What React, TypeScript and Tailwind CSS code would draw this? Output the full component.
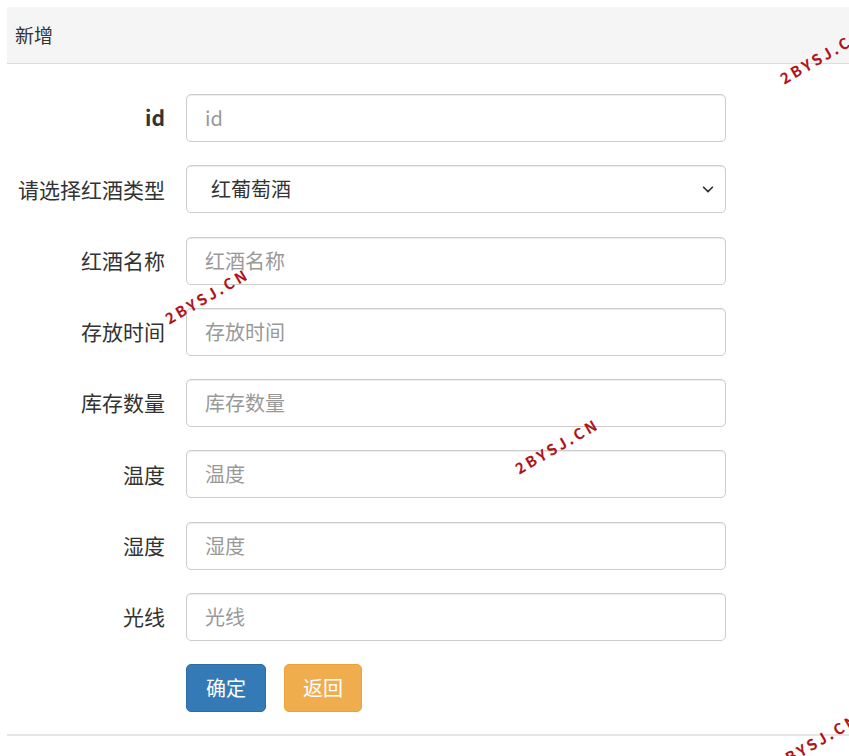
import React from "react";

const rows: [string, string, boolean?][] = [
  ["id", "id", true],
  ["请选择红酒类型", "SELECT"],
  ["红酒名称", "红酒名称"],
  ["存放时间", "存放时间"],
  ["库存数量", "库存数量"],
  ["温度", "温度"],
  ["湿度", "湿度"],
  ["光线", "光线"],
];

const Wm = ({ className }: { className: string }) => (
  <div className={"absolute text-[#b0141b] font-bold text-[15px] tracking-[3px] -rotate-[30deg] pointer-events-none " + className}>
    2BYSJ.CN
  </div>
);

export default function App() {
  return (
    <div className="relative w-[849px] h-[756px] bg-white overflow-hidden text-[#333]" style={{ fontFamily: '"Microsoft YaHei","Noto Sans CJK SC","Liberation Sans",sans-serif' }}>
      <div className="ml-[7px] mt-[7px] w-[860px]">
        <div className="h-[57px] bg-[#f5f5f5] border-b border-[#ddd] flex items-center px-[8px] text-[19px]">新增</div>
        <div className="pt-[30px] flex flex-col gap-[23.3px]">
          {rows.map(([label, ph, bold]) => (
            <div key={label} className="flex items-center h-[48px]">
              <div className={"w-[158px] whitespace-nowrap text-right pr-0 text-[21px] " + (bold ? "font-bold" : "")}>{label}</div>
              <div className="ml-[21px] w-[540px] h-[48px] border border-[#ccc] rounded-[5px] flex items-center px-[18px] text-[20px] shadow-[inset_0_1px_1px_rgba(0,0,0,0.075)]">
                {ph === "SELECT" ? (
                  <div className="flex w-full items-center justify-between pl-[6px] text-[#333]">
                    <span>红葡萄酒</span>
                    <svg width="14" height="14" viewBox="0 0 16 16" className="-mr-[8px]"><path d="M3 6l5 5 5-5" fill="none" stroke="#333" strokeWidth="2" strokeLinecap="round" strokeLinejoin="round" /></svg>
                  </div>
                ) : (
                  <span className="text-[#999]">{ph}</span>
                )}
              </div>
            </div>
          ))}
          <div className="flex gap-[18px] pl-[179px]">
            <div className="w-[80px] h-[48px] rounded-[5px] bg-[#337ab7] border border-[#2e6da4] text-white text-[20px] flex items-center justify-center">确定</div>
            <div className="w-[78px] h-[48px] rounded-[5px] bg-[#f0ad4e] border border-[#eea236] text-white text-[20px] flex items-center justify-center">返回</div>
          </div>
        </div>
        <div className="mt-[22px] border-b-2 border-[#e5e5e5]" />
      </div>
      <Wm className="left-[160px] top-[285px]" />
      <Wm className="left-[510px] top-[435px]" />
      <Wm className="left-[775px] top-[45px]" />
      <Wm className="left-[770px] top-[730px]" />
    </div>
  );
}
